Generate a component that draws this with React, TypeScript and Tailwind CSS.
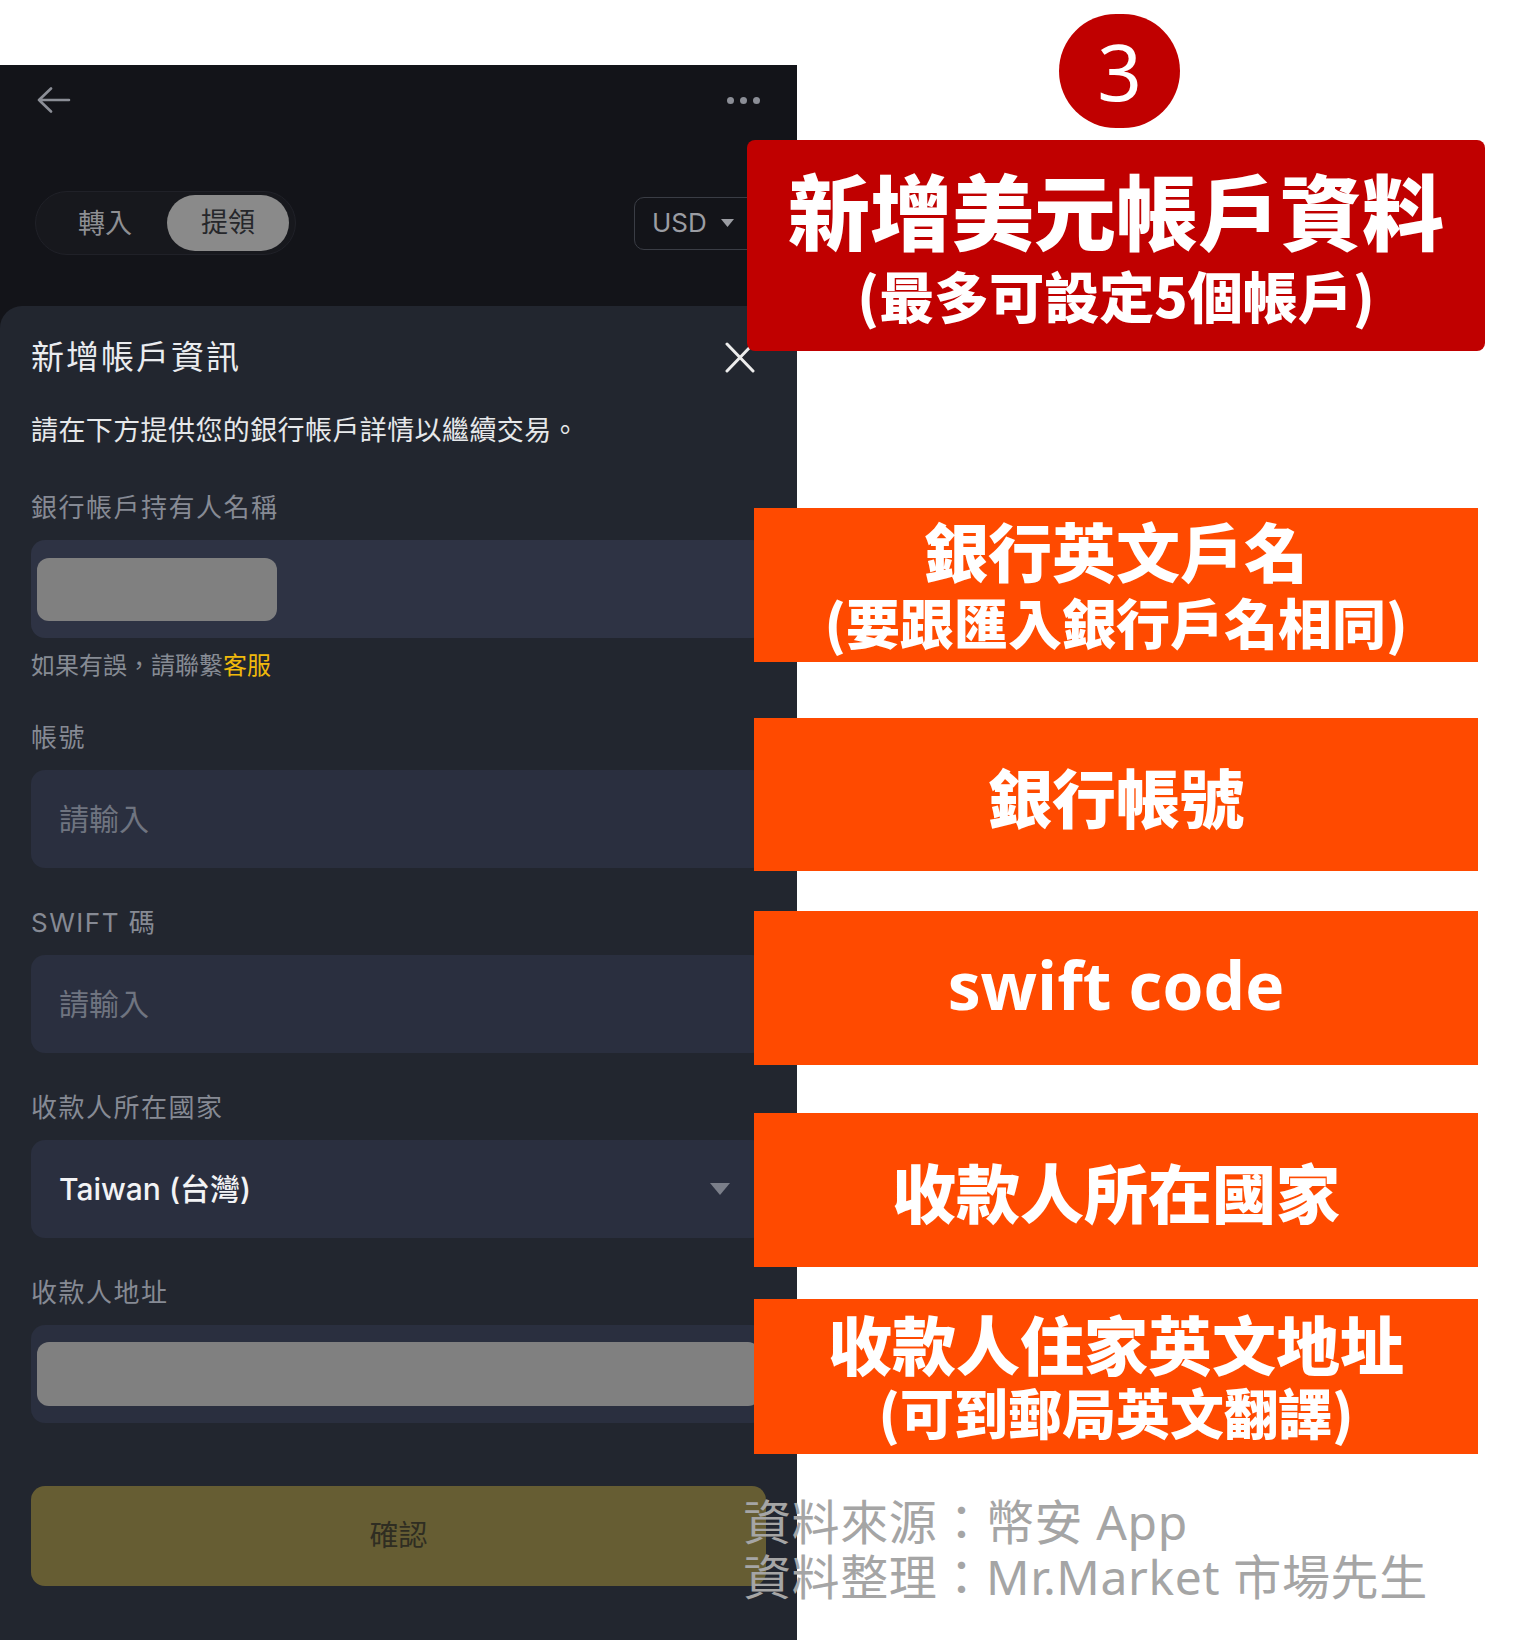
import React from "react";

const app = '[font-family:Inter,"Noto_Sans_CJK_TC",sans-serif]';
const cjk = '[font-family:"Noto_Sans_CJK_TC",sans-serif]';

function FieldLabel({ children, className = "" }: { children: React.ReactNode; className?: string }) {
  return (
    <div className={`text-[26px] tracking-[1.5px] leading-[36px] text-[#868a94] ${className}`}>{children}</div>
  );
}

function TextInput() {
  return (
    <div className="mt-[14px] h-[98px] rounded-[14px] bg-[#2a2f3f] flex items-center pl-[28px]">
      <span className="text-[30px] leading-none text-[#6f7480]">請輸入</span>
    </div>
  );
}

function PhoneScreen() {
  return (
    <div className={`mt-[65px] w-[797px] h-[1575px] bg-[#131419] flex flex-col ${app}`}>
      {/* top bar */}
      <div className="h-[70px] shrink-0 flex items-center justify-between pl-[37px] pr-[37px]">
        <svg width="34" height="26" viewBox="0 0 34 26" fill="none" stroke="#8b8e96" strokeWidth="2.6" strokeLinecap="round" strokeLinejoin="round">
          <path d="M32 13H2M14 1.5 2 13l12 11.5" />
        </svg>
        <div className="flex gap-[6px]">
          <span className="w-[7px] h-[7px] rounded-full bg-[#8b8e96]" />
          <span className="w-[7px] h-[7px] rounded-full bg-[#8b8e96]" />
          <span className="w-[7px] h-[7px] rounded-full bg-[#8b8e96]" />
        </div>
      </div>

      {/* tabs + currency */}
      <div className="mt-[56px] h-[64px] shrink-0 flex items-center justify-between pl-[35px] pr-[31px]">
        <div className="w-[261px] h-[64px] rounded-full bg-[#17181d] border border-[#202128] flex items-center">
          <span className="ml-[42px] text-[27px] leading-none text-[#8e8f93]">轉入</span>
          <span className="ml-[35px] w-[122px] h-[56px] rounded-full bg-[#8a8a8a] flex items-center justify-center text-[27px] text-[#26272b]">
            提領
          </span>
        </div>
        <div className="w-[132px] h-[53px] rounded-[10px] border border-[#3a3d45] flex items-center pl-[17px] gap-[14px]">
          <span className="text-[26px] leading-none text-[#9b9da3]">USD</span>
          <svg width="13" height="8" viewBox="0 0 13 8">
            <path d="M0 0h13L6.5 8z" fill="#9b9da3" />
          </svg>
        </div>
      </div>

      {/* bottom sheet */}
      <div className="mt-[51px] flex-1 bg-[#22262f] rounded-t-[22px] px-[31px] pt-[31px] flex flex-col">
        <div className="h-[40px] flex items-center justify-between">
          <span className="text-[33px] tracking-[2px] leading-[40px] text-[#eaecef]">新增帳戶資訊</span>
          <svg className="mr-[11px]" width="30" height="31" viewBox="0 0 30 31" fill="none" stroke="#ececec" strokeWidth="3" strokeLinecap="round">
            <path d="M2 2l26 27M28 2 2 29" />
          </svg>
        </div>
        <p className="mt-[36px] text-[27px] tracking-[0.4px] leading-[36px] text-[#e6e8ea]">請在下方提供您的銀行帳戶詳情以繼續交易。</p>

        <FieldLabel className="mt-[41px]">銀行帳戶持有人名稱</FieldLabel>
        <div className="mt-[14px] h-[98px] rounded-[14px] bg-[#2e3344] flex items-center pl-[6px]">
          <div className="w-[240px] h-[63px] rounded-[12px] bg-[#808080]" />
        </div>
        <p className="mt-[13px] text-[24px] leading-[30px] text-[#868b94]">
          如果有誤，請聯繫<span className="text-[#f0b90b]">客服</span>
        </p>

        <FieldLabel className="mt-[39px]">帳號</FieldLabel>
        <TextInput />

        <FieldLabel className="mt-[37px]">SWIFT 碼</FieldLabel>
        <TextInput />

        <FieldLabel className="mt-[37px]">收款人所在國家</FieldLabel>
        <div className="mt-[14px] h-[98px] rounded-[14px] bg-[#2a2f3f] flex items-center justify-between pl-[28px] pr-[36px]">
          <span className="text-[30px] font-medium leading-none text-[#f2f3f5]">Taiwan (台灣)</span>
          <svg width="20" height="12" viewBox="0 0 20 12">
            <path d="M0 0h20L10 12z" fill="#7b7f8a" />
          </svg>
        </div>

        <FieldLabel className="mt-[37px]">收款人地址</FieldLabel>
        <div className="mt-[14px] h-[98px] rounded-[14px] bg-[#2a2f3f] flex items-center pl-[6px] pr-[6px]">
          <div className="flex-1 h-[64px] rounded-[12px] bg-[#808080]" />
        </div>

        <button className="mt-[63px] h-[100px] rounded-[14px] bg-[#665d33] text-[29px] text-[#2f2d22]">確認</button>
      </div>
    </div>
  );
}

function Annotations() {
  return (
    <div className={`absolute left-[747px] top-0 w-[738px] flex flex-col text-white ${cjk}`}>
      <div className="mt-[14px] ml-[312px] w-[121px] h-[114px] rounded-full bg-[#c00000] flex items-center justify-center">
        <span className="text-[78px] leading-none [font-family:'Noto_Sans',sans-serif]">3</span>
      </div>

      <div className="mt-[12px] h-[211px] rounded-[8px] bg-[#c00000] flex flex-col items-center pt-[26px] font-black">
        <div className="text-[82px] leading-[86px]">新增美元帳戶資料</div>
        <div className="mt-[10px] text-[55px] leading-[64px]">(最多可設定5個帳戶)</div>
      </div>

      <div className="mt-[157px] ml-[7px] w-[724px] h-[154px] bg-[#ff4a00] flex flex-col items-center pt-[6px] font-black">
        <div className="text-[64px] leading-[70px]">銀行英文戶名</div>
        <div className="mt-[6px] text-[54px] leading-[64px]">(要跟匯入銀行戶名相同)</div>
      </div>

      <div className="mt-[56px] ml-[7px] w-[724px] h-[153px] bg-[#ff4a00] flex items-center justify-center font-black">
        <span className="text-[64px] leading-[70px]">銀行帳號</span>
      </div>

      <div className="mt-[40px] ml-[7px] w-[724px] h-[154px] bg-[#ff4a00] flex items-center justify-center pb-[8px]">
        <span className="text-[66px] leading-[68px] font-bold [font-family:'Open_Sans',sans-serif]">swift code</span>
      </div>

      <div className="mt-[48px] ml-[7px] w-[724px] h-[154px] bg-[#ff4a00] flex items-center justify-center font-black">
        <span className="text-[64px] leading-[70px]">收款人所在國家</span>
      </div>

      <div className="mt-[32px] ml-[7px] w-[724px] h-[155px] bg-[#ff4a00] flex flex-col items-center pt-[8px] font-black">
        <div className="text-[64px] leading-[70px]">收款人住家英文地址</div>
        <div className="mt-[3px] text-[54px] leading-[64px]">(可到郵局英文翻譯)</div>
      </div>

      <div className="mt-[40px] -ml-[4px] text-[48px] tracking-[0.6px] leading-[55px] text-[#a5a5a5] whitespace-nowrap [font-family:'Noto_Sans','Noto_Sans_CJK_TC',sans-serif]">
        <div>資料來源：幣安 App</div>
        <div>資料整理：Mr.Market 市場先生</div>
      </div>
    </div>
  );
}

export default function App() {
  return (
    <div className="relative w-[1523px] h-[1640px] bg-white overflow-hidden">
      <PhoneScreen />
      <Annotations />
    </div>
  );
}
